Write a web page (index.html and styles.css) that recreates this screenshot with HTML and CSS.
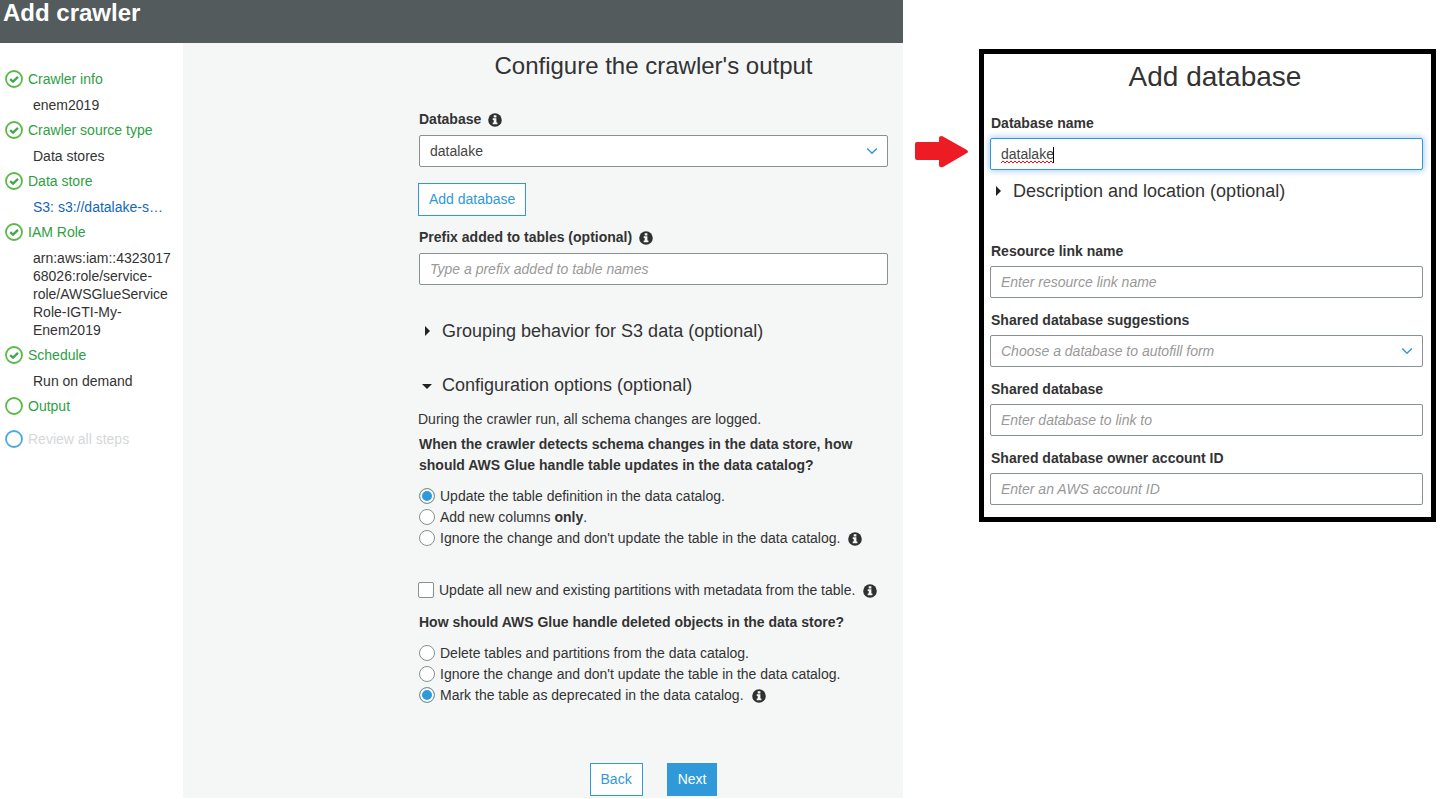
FILE: index.html
```html
<!DOCTYPE html>
<html lang="en">
<head>
<meta charset="utf-8">
<title>Add crawler</title>
<link rel="stylesheet" href="styles.css">
</head>
<body>
<svg class="sprite" aria-hidden="true">
  <symbol id="check" viewBox="0 0 18 18"><circle cx="9" cy="9" r="8" fill="none" stroke="#5bb947" stroke-width="1.8"/><path d="M5.2 9.2 8 11.6 13 6.9" fill="none" stroke="#3fa652" stroke-width="2.3"/></symbol>
  <symbol id="ring" viewBox="0 0 18 18"><circle cx="9" cy="9" r="8" fill="none" stroke="currentColor" stroke-width="1.8"/></symbol>
  <symbol id="info" viewBox="0 0 14 14"><circle cx="7" cy="7" r="6.8" fill="#2e3130"/><path d="M5.7 2.2h2.7v2.2H5.7zM4.7 5.2h3.7v4.4h1v1.7H4.7V9.6h1V6.9h-1z" fill="#f5f7f7"/></symbol>
  <symbol id="chevron" viewBox="0 0 12 8"><path d="M1.2 1.5 6 6.2l4.8-4.7" fill="none" stroke="#3099d9" stroke-width="1.4"/></symbol>
</svg>
<div class="page">
  <section class="wizard">
    <header class="topbar"><h1>Add crawler</h1></header>
    <div class="wizard-body">
      <nav class="steps" aria-label="Steps">
        <div class="step"><svg class="mark"><use href="#check"/></svg>Crawler info</div>
        <div class="detail">enem2019</div>
        <div class="step"><svg class="mark"><use href="#check"/></svg>Crawler source type</div>
        <div class="detail">Data stores</div>
        <div class="step"><svg class="mark"><use href="#check"/></svg>Data store</div>
        <div class="detail"><a href="#">S3: s3://datalake-s…</a></div>
        <div class="step"><svg class="mark"><use href="#check"/></svg>IAM Role</div>
        <div class="detail">arn:aws:iam::4323017<br>68026:role/service-<br>role/AWSGlueService<br>Role-IGTI-My-<br>Enem2019</div>
        <div class="step"><svg class="mark"><use href="#check"/></svg>Schedule</div>
        <div class="detail">Run on demand</div>
        <div class="step"><svg class="mark"><use href="#ring"/></svg>Output</div>
        <div class="step pending"><svg class="mark"><use href="#ring"/></svg>Review all steps</div>
      </nav>
      <main class="content">
        <h2 class="crawler-title">Configure the crawler's output</h2>
        <form class="form">
          <div class="label-row"><label for="db">Database</label><svg class="info"><use href="#info"/></svg></div>
          <div class="field"><select id="db" class="box"><option>datalake</option></select><svg class="chevron"><use href="#chevron"/></svg></div>
          <button type="button" class="btn add-db">Add database</button>
          <div class="label-row"><label for="prefix">Prefix added to tables (optional)</label><svg class="info"><use href="#info"/></svg></div>
          <div class="field"><input id="prefix" class="box" type="text" placeholder="Type a prefix added to table names"></div>
          <details class="group">
            <summary><svg class="tri" viewBox="0 0 12 12"><path d="M4 1v10l5-5z"/></svg>Grouping behavior for S3 data (optional)</summary>
          </details>
          <details class="options" open>
            <summary><svg class="tri" viewBox="0 0 12 12"><path d="M1 5h10l-5 5z"/></svg>Configuration options (optional)</summary>
            <p class="note">During the crawler run, all schema changes are logged.</p>
            <fieldset>
              <legend>When the crawler detects schema changes in the data store, how should AWS Glue handle table updates in the data catalog?</legend>
              <div class="choice"><input type="radio" name="change" id="c1" checked><label for="c1">Update the table definition in the data catalog.</label></div>
              <div class="choice"><input type="radio" name="change" id="c2"><label for="c2">Add new columns <b>only</b>.</label></div>
              <div class="choice"><input type="radio" name="change" id="c3"><label for="c3">Ignore the change and don't update the table in the data catalog.</label><svg class="info"><use href="#info"/></svg></div>
            </fieldset>
            <div class="choice partitions"><input type="checkbox" id="parts"><label for="parts">Update all new and existing partitions with metadata from the table.</label><svg class="info"><use href="#info"/></svg></div>
            <fieldset>
              <legend>How should AWS Glue handle deleted objects in the data store?</legend>
              <div class="choice"><input type="radio" name="del" id="d1"><label for="d1">Delete tables and partitions from the data catalog.</label></div>
              <div class="choice"><input type="radio" name="del" id="d2"><label for="d2">Ignore the change and don't update the table in the data catalog.</label></div>
              <div class="choice"><input type="radio" name="del" id="d3" checked><label for="d3">Mark the table as deprecated in the data catalog.</label><svg class="info"><use href="#info"/></svg></div>
            </fieldset>
          </details>
          <div class="actions">
            <button type="button" class="btn">Back</button>
            <button type="button" class="btn primary">Next</button>
          </div>
        </form>
      </main>
    </div>
  </section>
  <div class="pointer">
    <svg width="54" height="32" viewBox="0 0 54 32" aria-hidden="true"><path d="M2 6h22V2q0-2 3-2L52 14q2 2 0 3L28 31q-4 1-4-2v-5H2q-2 0-2-2V8q0-2 2-2z" fill="#ed1c24"/></svg>
  </div>
  <form class="panel">
    <h2>Add database</h2>
    <label for="name">Database name</label>
    <div class="field">
      <input id="name" class="box focused" type="text" value="datalake" spellcheck="false">
      <svg class="typing" width="54" height="18" viewBox="0 0 54 18" aria-hidden="true"><path d="M0 16l2-2 2 2 2-2 2 2 2-2 2 2 2-2 2 2 2-2 2 2 2-2 2 2 2-2 2 2 2-2 2 2 2-2 2 2 2-2 2 2 2-2 2 2 2-2 2 2 2-2 2 2" fill="none" stroke="#f00" stroke-width="1"/><path d="M52.5 0v16" stroke="#000"/></svg>
    </div>
    <details class="location">
      <summary><svg class="tri" viewBox="0 0 12 12"><path d="M4 1v10l5-5z"/></svg>Description and location (optional)</summary>
    </details>
    <label for="link">Resource link name</label>
    <div class="field"><input id="link" class="box" type="text" placeholder="Enter resource link name"></div>
    <label for="sugg">Shared database suggestions</label>
    <div class="field"><select id="sugg" class="box empty"><option>Choose a database to autofill form</option></select><svg class="chevron"><use href="#chevron"/></svg></div>
    <label for="shared">Shared database</label>
    <div class="field"><input id="shared" class="box" type="text" placeholder="Enter database to link to"></div>
    <label for="owner">Shared database owner account ID</label>
    <div class="field"><input id="owner" class="box" type="text" placeholder="Enter an AWS account ID"></div>
  </form>
</div>
</body>
</html>
```
FILE: styles.css
```css
* { box-sizing: border-box; }
body {
  margin: 0;
  background: #fff;
  color: #333;
  font: 14px/21px "Liberation Sans", Arial, sans-serif;
}
h1, h2, p { margin: 0; }
.sprite { position: absolute; width: 0; height: 0; }
.page {
  display: grid;
  grid-template-columns: 903fr 76px 457fr;
  align-items: start;
  padding-right: 9px;
}

/* wizard */
.topbar { height: 43px; background: #545b5d; padding-left: 3px; }
.topbar h1 { color: #fff; font-size: 24px; line-height: 26px; }
.wizard-body { display: flex; }
.steps { flex: 0 0 183px; padding: 27px 0 0 5px; line-height: 18px; }
.step { display: flex; gap: 5px; color: #2ea044; }
.step.pending { margin-top: 15px; color: #d5d8d9; }
.mark { width: 18px; height: 18px; color: #5bb947; }
.pending .mark { color: #4fa8e0; }
.detail { margin: 8px 0 7px; padding-left: 28px; }
.detail a { color: #1166bb; text-decoration: none; }

.content { flex: 1; min-width: 0; background: #f5f7f7; padding: 6px 15px 2px 235px; }
h2 { text-align: center; font-weight: 400; line-height: 34px; }
.crawler-title { font-size: 24px; margin-bottom: 26px; padding-left: 1px; }
.label-row { display: flex; align-items: center; gap: 7px; margin-bottom: 5px; padding-left: 1px; }
.label-row label { font-weight: 700; }
.info { width: 14px; height: 14px; flex: none; }
.field { position: relative; padding-left: 1px; }
.box {
  display: block;
  width: 100%;
  height: 32px;
  margin: 0;
  padding: 0 10px;
  border: 1px solid #879191;
  border-radius: 2px;
  background: #fff;
  color: #444;
  font: inherit;
  appearance: none;
  outline: 0;
}
.box::placeholder { color: #999; font-style: italic; opacity: 1; }
.box.empty { color: #999; font-style: italic; }
.chevron { position: absolute; right: 10px; top: 12px; width: 12px; height: 8px; pointer-events: none; }
.btn {
  height: 33px;
  padding: 0 10px;
  border: 1px solid #3099d9;
  background: #fff;
  color: #3099d9;
  font: inherit;
}
.btn.primary { background: #3099d9; color: #fff; }
.add-db { display: block; margin: 16px 0 11px; }

summary { display: flex; align-items: center; gap: 9px; list-style: none; font-size: 18px; line-height: 24px; padding-left: 3px; }
.tri { width: 12px; height: 12px; fill: #222; }
.group { margin-top: 34px; }
.options { margin-top: 30px; }
.note { margin-top: 12px; }
fieldset { border: 0; margin: 4px 0 0; padding: 0; min-width: 0; }
legend { padding: 0 0 10px 1px; font-weight: 700; }
.choice { display: flex; align-items: center; gap: 5px; padding-left: 1px; }
.choice .info { margin-left: 3px; }
.choice input {
  appearance: none;
  flex: none;
  width: 16px;
  height: 16px;
  margin: 0 0 1px;
  border: 1px solid #879191;
  border-radius: 50%;
  background: #fff;
}
.choice input:checked { background: #3099d9; box-shadow: inset 0 0 0 2px #fff; }
.choice input[type="checkbox"] { border-radius: 2px; }
.partitions { margin: 31px 0 11px; padding-left: 0; }
.actions { display: flex; justify-content: center; gap: 24px; margin-top: 57px; padding-left: 1px; }

/* database panel */
.pointer { padding: 136px 0 0 12px; }
.panel { margin-top: 49px; border: 5px solid #000; padding: 6px 8px 0 5px; }
.panel h2 { font-size: 28px; margin-bottom: 19px; padding-left: 18px; }
.panel label { display: block; font-weight: 700; padding-left: 2px; margin-bottom: 4px; }
.panel .field { margin-bottom: 12px; }
.box.focused { border-color: #3099d9; box-shadow: 0 0 6px 1px #a9cdf0; }
.typing { position: absolute; left: 12px; top: 9px; }
.location { margin: -3px 0 38px; }
```
